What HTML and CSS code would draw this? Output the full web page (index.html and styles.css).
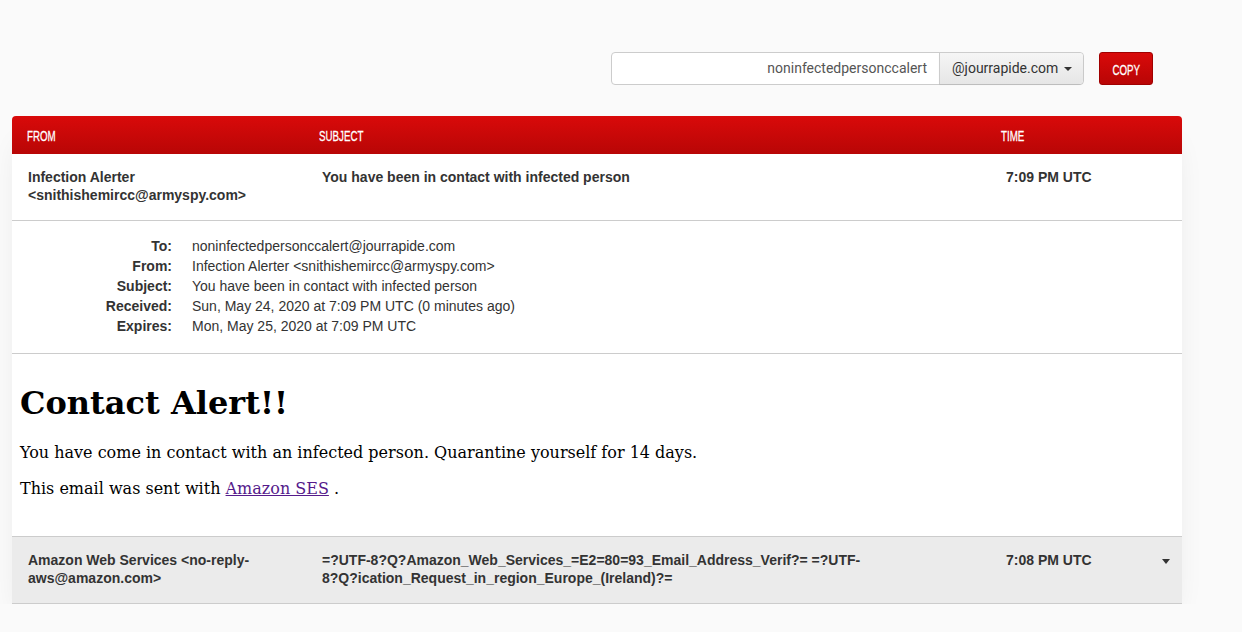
FILE: index.html
```html
<!DOCTYPE html>
<html>
<head>
<meta charset="utf-8">
<link rel="stylesheet" href="styles.css">
</head>
<body>
<div class="page">
  <div class="toolbar">
    <div class="addr-group">
      <div class="addr-input">noninfectedpersonccalert</div>
      <div class="addr-domain">@jourrapide.com <span class="caret"></span></div>
    </div>
    <button class="copy-btn"><span class="narrow">COPY</span></button>
  </div>

  <div class="mailbox">
    <div class="head row">
      <div class="c-from"><span class="narrow">FROM</span></div>
      <div class="c-subj"><span class="narrow">SUBJECT</span></div>
      <div class="c-time"><span class="narrow">TIME</span></div>
    </div>

    <div class="mail open">
      <div class="row summary">
        <div class="c-from">Infection Alerter<br>&lt;snithishemircc@armyspy.com&gt;</div>
        <div class="c-subj">You have been in contact with infected person</div>
        <div class="c-time">7:09 PM UTC</div>
      </div>
      <div class="meta">
        <div class="meta-row"><span class="k">To:</span><span class="v">noninfectedpersonccalert@jourrapide.com</span></div>
        <div class="meta-row"><span class="k">From:</span><span class="v">Infection Alerter &lt;snithishemircc@armyspy.com&gt;</span></div>
        <div class="meta-row"><span class="k">Subject:</span><span class="v">You have been in contact with infected person</span></div>
        <div class="meta-row"><span class="k">Received:</span><span class="v">Sun, May 24, 2020 at 7:09 PM UTC (0 minutes ago)</span></div>
        <div class="meta-row"><span class="k">Expires:</span><span class="v">Mon, May 25, 2020 at 7:09 PM UTC</span></div>
      </div>
      <div class="body">
        <h1>Contact Alert!!</h1>
        <p>You have come in contact with an infected person. Quarantine yourself for 14 days.</p>
        <p>This email was sent with <a href="#">Amazon SES</a> .</p>
      </div>
    </div>

    <div class="mail closed">
      <div class="row summary">
        <div class="c-from">Amazon Web Services &lt;no-reply-<br>aws@amazon.com&gt;</div>
        <div class="c-subj">=?UTF-8?Q?Amazon_Web_Services_=E2=80=93_Email_Address_Verif?= =?UTF-<br>8?Q?ication_Request_in_region_Europe_(Ireland)?=</div>
        <div class="c-time">7:08 PM UTC</div>
        <span class="row-caret"></span>
      </div>
    </div>
  </div>
</div>
</body>
</html>
```

FILE: styles.css
```css
html, body {
  margin: 0;
  padding: 0;
  background: #fafafa;
  font-family: "Liberation Sans", Arial, sans-serif;
  color: #333;
}
.page {
  width: 1170px;
  margin-left: 12px;
  padding-top: 52px;
}
.toolbar {
  display: flex;
  justify-content: flex-end;
  align-items: stretch;
  gap: 15px;
  padding-right: 29px;
  height: 33px;
}
.addr-group {
  display: flex;
  border: 1px solid #ccc;
  border-radius: 4px;
  background: #fff;
  box-sizing: border-box;
  height: 33px;
}
.addr-input {
  width: 315px;
  text-align: right;
  padding-right: 12px;
  font-size: 14px;
  line-height: 31px;
  color: #555;
  font-family: Roboto, "Liberation Sans", sans-serif;
}
.addr-domain {
  width: 144px;
  padding-left: 12px;
  box-sizing: border-box;
  background: linear-gradient(#f5f5f5, #e6e6e6);
  border-left: 1px solid #ccc;
  font-size: 14px;
  line-height: 31px;
  color: #333;
  font-family: Roboto, "Liberation Sans", sans-serif;
  border-radius: 0 4px 4px 0;
  box-shadow: 0 1px 1px rgba(0,0,0,0.08);
}
.caret {
  display: inline-block;
  width: 0;
  height: 0;
  border-left: 4px solid transparent;
  border-right: 4px solid transparent;
  border-top: 4px solid #333;
  vertical-align: middle;
  margin-left: 2px;
}
.narrow {
  display: inline-block;
  font-family: "Liberation Sans", Arial, sans-serif;
  transform: scaleX(0.65);
  transform-origin: left center;
  -webkit-text-stroke: 0.3px #fff;
}
.copy-btn {
  width: 54px;
  height: 33px;
  border: 1px solid #a00000;
  border-radius: 3px;
  background: linear-gradient(#d90a0a, #b80505);
  color: #fff;
  font-size: 15px;
  padding: 2px 0 0;
}
.copy-btn .narrow {
  transform-origin: center;
}
.mailbox {
  margin-top: 31px;
  box-shadow: 0 18px 30px -12px rgba(0,0,0,0.12);
}
.row {
  display: grid;
  grid-template-columns: 292px 682px 196px;
  position: relative;
}
.row > div {
  padding: 0 16px;
}
.head {
  height: 38px;
  background: linear-gradient(#d90a0a, #b80606);
  border-radius: 4px 4px 0 0;
  color: #fff;
  font-size: 15px;
  line-height: 40px;
}
.head > div {
  padding-left: 15px;
}
.summary {
  font-size: 14px;
  font-weight: bold;
  line-height: 18px;
  padding: 14px 0 16px;
  min-height: 36px;
  color: #333;
}
.summary .c-subj {
  padding-left: 18px;
}
.summary .c-time {
  padding-left: 20px;
}
.open .summary {
  background: #fff;
  border-bottom: 1px solid #ccc;
}
.meta {
  background: #fff;
  padding: 15px 0 17px;
  border-bottom: 1px solid #ccc;
  font-size: 14px;
  line-height: 20px;
}
.meta-row {
  display: flex;
}
.meta-row .k {
  width: 160px;
  text-align: right;
  font-weight: bold;
  color: #333;
}
.meta-row .v {
  padding-left: 20px;
  color: #333;
}
.body {
  background: #fff;
  padding: 8px 8px 1px;
  min-height: 182px;
  box-sizing: border-box;
  font-family: "DejaVu Serif", serif;
  color: #000;
}
.body h1 {
  font-size: 32px;
  margin: 23px 0 21px;
  line-height: 37px;
}
.body p {
  font-size: 16px;
  margin: 16px 0;
  line-height: 20px;
}
.body a {
  color: #551a8b;
}
.closed .summary {
  background: #ebebeb;
  border-top: 1px solid #ccc;
  border-bottom: 1px solid #ccc;
}
.row-caret {
  position: absolute;
  right: 12px;
  top: 22px;
  width: 0;
  height: 0;
  border-left: 4px solid transparent;
  border-right: 4px solid transparent;
  border-top: 5px solid #333;
}
```
